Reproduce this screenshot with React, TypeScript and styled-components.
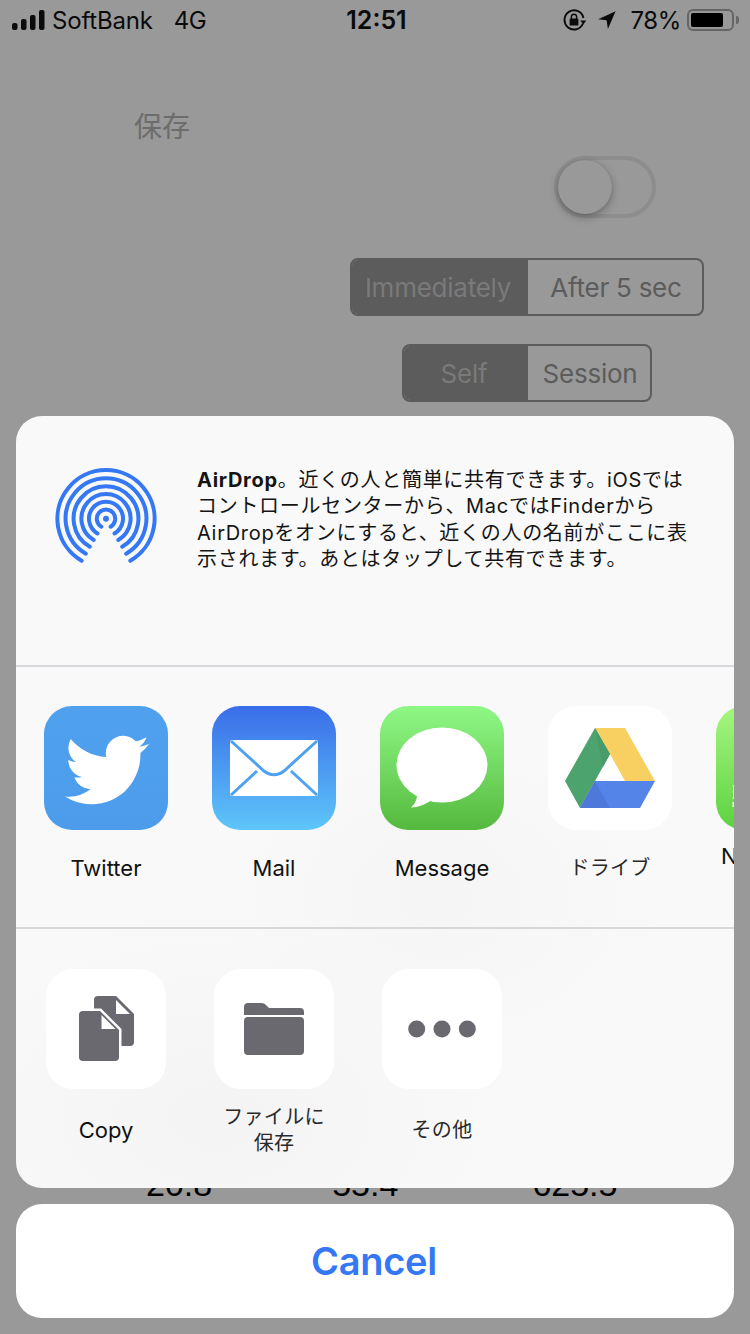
import styled, { createGlobalStyle } from "styled-components";

const GlobalStyle = createGlobalStyle`
	html, body {
		margin: 0;
		padding: 0;
		background: #999999;
	}
	body {
		font-family: Inter, "Noto Sans CJK JP", sans-serif;
	}
`;

const Page = styled.div`
	position: relative;
	width: 750px;
	height: 1334px;
	overflow: hidden;
	background: #999999;
	display: flex;
	flex-direction: column;
`;

const StatusBar = styled.div`
	height: 40px;
	flex-shrink: 0;
	padding: 0 11px 0 12px;
	display: grid;
	grid-template-columns: 1fr auto 1fr;
	align-items: center;
	color: #0b0b0b;
	font-size: 24px;
`;

const StatusLeft = styled.div`
	display: flex;
	align-items: center;
`;

const Carrier = styled.span`
	margin-left: 7px;
	letter-spacing: -0.2px;
`;

const Network = styled.span`
	margin-left: 21px;
	letter-spacing: -0.4px;
`;

const Clock = styled.div`
	margin-left: 2px;
	font-size: 25px;
	font-weight: 600;
`;

const StatusRight = styled.div`
	display: flex;
	align-items: center;
	justify-content: flex-end;
`;

const Percent = styled.span`
	margin: 0 6px 0 15px;
	letter-spacing: -0.4px;
`;

const Battery = styled.div`
	position: relative;
	box-sizing: border-box;
	width: 47px;
	height: 22px;
	border: 2px solid #666666;
	border-radius: 6px;
	padding: 2px;
	margin-right: 5px;

	&::after {
		content: "";
		position: absolute;
		right: -7px;
		top: 5px;
		width: 3px;
		height: 8px;
		border-radius: 0 3px 3px 0;
		background: #666666;
	}
`;

const BatteryLevel = styled.div`
	width: 32px;
	height: 100%;
	background: #000000;
	border-radius: 2px;
`;

const Backdrop = styled.div`
	display: flex;
	flex-direction: column;
`;

const Title = styled.div`
	margin: 65px 0 0 134px;
	font-family: "Noto Sans CJK JP", sans-serif;
	font-size: 28px;
	line-height: 40px;
	color: #6c6c6c;
`;

const SwitchTrack = styled.div`
	align-self: flex-end;
	box-sizing: border-box;
	width: 102px;
	height: 62px;
	margin: 11px 94px 0 0;
	border: 4px solid #8d8d8d;
	border-radius: 31px;
`;

const SwitchKnob = styled.div`
	width: 54px;
	height: 54px;
	border-radius: 50%;
	background: #999999;
	box-shadow: 0 3px 8px rgba(0, 0, 0, 0.3), 0 0 1px rgba(0, 0, 0, 0.2);
`;

const Segmented = styled.div<{ $right: number; $top: number }>`
	align-self: flex-end;
	display: flex;
	box-sizing: border-box;
	height: 58px;
	margin: ${(p) => p.$top}px ${(p) => p.$right}px 0 0;
	border: 2px solid #5c5c5c;
	border-radius: 8px;
	overflow: hidden;
`;

const Segment = styled.div<{ $active?: boolean; $width: number }>`
	width: ${(p) => p.$width}px;
	box-sizing: border-box;
	padding: ${(p) => (p.$active ? "0 4px 0 0" : "0 0 0 2px")};
	display: flex;
	align-items: center;
	justify-content: center;
	font-size: 26px;
	letter-spacing: -0.25px;
	background: ${(p) => (p.$active ? "#5c5c5c" : "transparent")};
	color: ${(p) => (p.$active ? "#7a7a7a" : "#5c5c5c")};
`;

const Readings = styled.div`
	margin-top: 762px;
	height: 40px;
	display: flex;
	font-family: "Liberation Sans", Arial, sans-serif;
	font-size: 34px;
	line-height: 40px;
	color: #000000;
`;

const Reading = styled.div<{ $left: number }>`
	margin-left: ${(p) => p.$left}px;
`;

const Overlay = styled.div`
	position: absolute;
	inset: 0;
	padding: 16px;
	box-sizing: border-box;
	display: flex;
	flex-direction: column;
	justify-content: flex-end;
	gap: 16px;
`;

const Sheet = styled.div`
	height: 772px;
	border-radius: 26px;
	overflow: hidden;
	display: flex;
	flex-direction: column;
	background:
		radial-gradient(ellipse 300px 200px at 200px 700px, #f4f4f5, transparent),
		radial-gradient(ellipse 220px 160px at 420px 480px, #f5f5f6, transparent),
		#f9f9f9;
`;

const AirDropPanel = styled.div`
	height: 251px;
	box-sizing: border-box;
	flex-shrink: 0;
	padding: 49px 0 0 34px;
	display: flex;
	align-items: flex-start;
	gap: 35px;
	border-bottom: 2px solid #d8d8dc;
`;

const AirDropText = styled.div`
	margin-top: 2px;
	font-size: 20px;
	line-height: 26.3px;
	letter-spacing: 0.7px;
	color: #141414;
	white-space: nowrap;

	b {
		font-weight: 700;
	}
`;

const ShareRow = styled.div<{ $top: number; $height: number; $line?: boolean }>`
	height: ${(p) => p.$height}px;
	box-sizing: border-box;
	flex-shrink: 0;
	padding: ${(p) => p.$top}px 0 0 6px;
	display: flex;
	overflow: hidden;
	border-bottom: ${(p) => (p.$line ? "2px solid #d8d8dc" : "0")};
`;

const ShareItem = styled.div`
	width: 168px;
	flex-shrink: 0;
	display: flex;
	flex-direction: column;
	align-items: center;
`;

const AppIcon = styled.div<{ $bg: string }>`
	width: 124px;
	height: 124px;
	border-radius: 28px;
	overflow: hidden;
	background: ${(p) => p.$bg};
	display: flex;
	align-items: center;
	justify-content: center;
	flex-shrink: 0;
`;

const ActionIcon = styled.div`
	width: 120px;
	height: 120px;
	border-radius: 27px;
	overflow: hidden;
	background: #ffffff;
	flex-shrink: 0;
`;

const Label = styled.div<{ $top: number; $kana?: boolean; $cut?: boolean }>`
	margin-top: ${(p) => p.$top}px;
	height: 52px;
	width: 100%;
	display: flex;
	align-items: center;
	justify-content: ${(p) => (p.$cut ? "flex-start" : "center")};
	padding-left: ${(p) => (p.$cut ? "27px" : "0")};
	box-sizing: border-box;
	text-align: ${(p) => (p.$cut ? "left" : "center")};
	font-size: ${(p) => (p.$kana ? "20px" : "22px")};
	letter-spacing: ${(p) => (p.$kana ? "0.3px" : "0")};
	line-height: 26px;
	color: ${(p) => (p.$kana ? "#2a2a2a" : "#111111")};
`;

const CancelButton = styled.div`
	height: 114px;
	border-radius: 26px;
	background: #ffffff;
	display: flex;
	align-items: center;
	justify-content: center;
	padding-right: 2px;
	font-size: 38px;
	font-weight: 600;
	letter-spacing: -0.3px;
	color: #3478f6;
`;

const SignalIcon = () => (
	<svg width="33" height="20" viewBox="0 0 33 20">
		<rect x="0" y="13" width="5.5" height="7" rx="2" fill="#0b0b0b" />
		<rect x="9" y="9" width="5.5" height="11" rx="2" fill="#0b0b0b" />
		<rect x="18" y="5" width="5.5" height="15" rx="2" fill="#0b0b0b" />
		<rect x="27" y="0" width="5.5" height="20" rx="2" fill="#0b0b0b" />
	</svg>
);

const RotationLockIcon = () => (
	<svg width="24" height="22" viewBox="0 0 24 22">
		<path d="M20 14.5A9.6 9.6 0 1 1 20.5 9" fill="none" stroke="#0b0b0b" strokeWidth="1.9" />
		<path d="M17.3 11.6h6l-3 3.9z" fill="#0b0b0b" />
		<rect x="6.6" y="9.6" width="8.8" height="7" rx="1.2" fill="#0b0b0b" />
		<path d="M8.4 10V7.8a2.6 2.6 0 0 1 5.2 0V10" fill="none" stroke="#0b0b0b" strokeWidth="1.5" />
	</svg>
);

const LocationIcon = () => (
	<svg width="18" height="18" viewBox="0 0 18 18" style={{ marginLeft: 11 }}>
		<path d="M17.6 0.3 0.2 8.2l8.4 1 1.3 8.7z" fill="#0b0b0b" />
	</svg>
);

const ringRadii = [48.6, 40.4, 32.4, 24.6, 17, 9.2];

const AirDropIcon = () => (
	<svg width="112" height="105" viewBox="0 0 112 105">
		{ringRadii.map((r) => {
			const y = (53.7 + r * 0.866).toFixed(2);
			return (
				<path
					key={r}
					d={`M${56 - r * 0.5} ${y}A${r} ${r} 0 1 1 ${56 + r * 0.5} ${y}`}
					fill="none"
					stroke="#3478f6"
					strokeWidth="4"
					strokeLinecap="round"
				/>
			);
		})}
		<circle cx="56" cy="53.7" r="3" fill="#3478f6" />
	</svg>
);

const TwitterIcon = () => (
	<svg width="84" height="84" viewBox="0 0 24 24" style={{ marginTop: 4, marginLeft: 2 }}>
		<path
			fill="#ffffff"
			d="M23.953 4.57a10 10 0 01-2.825.775 4.958 4.958 0 002.163-2.723c-.951.555-2.005.959-3.127 1.184a4.92 4.92 0 00-8.384 4.482C7.69 8.095 4.067 6.13 1.64 3.162a4.822 4.822 0 00-.666 2.475c0 1.71.87 3.213 2.188 4.096a4.904 4.904 0 01-2.228-.616v.06a4.923 4.923 0 003.946 4.827 4.996 4.996 0 01-2.212.085 4.936 4.936 0 004.604 3.417 9.867 9.867 0 01-6.102 2.105c-.39 0-.779-.023-1.17-.067a13.995 13.995 0 007.557 2.209c9.053 0 13.998-7.496 13.998-13.985 0-.21 0-.42-.015-.63A9.935 9.935 0 0024 4.59z"
		/>
	</svg>
);

const MailIcon = () => (
	<svg width="124" height="124" viewBox="0 0 124 124">
		<rect x="18" y="34" width="88" height="56" rx="2" fill="#ffffff" />
		<path
			d="M19 35l33 30c6 5 14 5 20 0l33-30"
			fill="none"
			stroke="#4ea2f1"
			strokeWidth="3"
		/>
		<path d="M19 89l26-24M105 89L79 65" fill="none" stroke="#4ea2f1" strokeWidth="3" />
	</svg>
);

const MessageIcon = () => (
	<svg width="124" height="124" viewBox="0 0 124 124">
		<ellipse cx="62" cy="59" rx="45.5" ry="37.5" fill="#ffffff" />
		<path d="M37 86c1 6-2 12-6 15.500 7 0 14-3 20-7z" fill="#ffffff" />
	</svg>
);

const DriveIcon = () => (
	<svg width="124" height="124" viewBox="0 0 124 124">
		<path d="M47 22h30l30 53H77L62 48z" fill="#f8d062" />
		<path d="M47 22l15 26-30 54-15-27z" fill="#4ca36d" />
		<path d="M47 22l15 26-7 13z" fill="#499c69" />
		<path d="M47 75h60l-15 27H32z" fill="#5584e9" />
		<path d="M47 75l15 27H32z" fill="#4e79da" />
	</svg>
);

// only the left sliver of this app's glyph shows before the sheet clips it
const CutOffIcon = () => (
	<svg width="124" height="124" viewBox="0 0 124 124">
		<path d="M17 79h1v14h-1zM16.500 96h1.500v5h-1.500z" fill="#e9fbe2" />
	</svg>
);

const CopyIcon = () => (
	<svg width="120" height="120" viewBox="0 0 120 120">
		<path
			d="M52 27h18l18 18v28a4 4 0 0 1-4 4H52a4 4 0 0 1-4-4V31a4 4 0 0 1 4-4z"
			fill="#69696f"
		/>
		<path d="M70 31v14h14z" fill="#ffffff" />
		<path
			d="M37 42h17l19 19v27a4 4 0 0 1-4 4H37a4 4 0 0 1-4-4V46a4 4 0 0 1 4-4z"
			fill="#69696f"
			stroke="#ffffff"
			strokeWidth="5"
			paintOrder="stroke"
		/>
		<path d="M55.500 46v14h14z" fill="#ffffff" />
	</svg>
);

const FolderIcon = () => (
	<svg width="120" height="120" viewBox="0 0 120 120">
		<path
			d="M30 46v-8a4 4 0 0 1 4-4h13c3 0 4 1 6 3l2 2h31a4 4 0 0 1 4 4v3z"
			fill="#69696f"
		/>
		<rect x="30" y="48" width="60" height="38" rx="4" fill="#69696f" />
	</svg>
);

const MoreIcon = () => (
	<svg width="120" height="120" viewBox="0 0 120 120">
		<circle cx="34.700" cy="60" r="8.500" fill="#69696f" />
		<circle cx="60" cy="60" r="8.500" fill="#69696f" />
		<circle cx="85.300" cy="60" r="8.500" fill="#69696f" />
	</svg>
);

const App = () => {
	return (
		<Page>
			<GlobalStyle />
			<StatusBar>
				<StatusLeft>
					<SignalIcon />
					<Carrier>SoftBank</Carrier>
					<Network>4G</Network>
				</StatusLeft>
				<Clock>12:51</Clock>
				<StatusRight>
					<RotationLockIcon />
					<LocationIcon />
					<Percent>78%</Percent>
					<Battery>
						<BatteryLevel />
					</Battery>
				</StatusRight>
			</StatusBar>

			<Backdrop>
				<Title>保存</Title>
				<SwitchTrack>
					<SwitchKnob />
				</SwitchTrack>
				<Segmented $right={46} $top={40}>
					<Segment $active $width={176}>Immediately</Segment>
					<Segment $width={174}>After 5 sec</Segment>
				</Segmented>
				<Segmented $right={98} $top={28}>
					<Segment $active $width={124}>Self</Segment>
					<Segment $width={122}>Session</Segment>
				</Segmented>
				<Readings>
					<Reading $left={146}>20.8</Reading>
					<Reading $left={120}>55.4</Reading>
					<Reading $left={134}>625.5</Reading>
				</Readings>
			</Backdrop>

			<Overlay>
				<Sheet>
					<AirDropPanel>
						<AirDropIcon />
						<AirDropText>
							<b>AirDrop</b>。近くの人と簡単に共有できます。iOSでは
							<br />
							コントロールセンターから、MacではFinderから
							<br />
							AirDropをオンにすると、近くの人の名前がここに表
							<br />
							示されます。あとはタップして共有できます。
						</AirDropText>
					</AirDropPanel>

					<ShareRow $top={39} $height={262} $line>
						<ShareItem>
							<AppIcon $bg="linear-gradient(#4fa1ee, #4c9ceb)">
								<TwitterIcon />
							</AppIcon>
							<Label $top={12}>Twitter</Label>
						</ShareItem>
						<ShareItem>
							<AppIcon $bg="linear-gradient(#3a6de8, #5ec6fa)">
								<MailIcon />
							</AppIcon>
							<Label $top={12}>Mail</Label>
						</ShareItem>
						<ShareItem>
							<AppIcon $bg="linear-gradient(#8ff885, #55b93e)">
								<MessageIcon />
							</AppIcon>
							<Label $top={12}>Message</Label>
						</ShareItem>
						<ShareItem>
							<AppIcon $bg="#ffffff">
								<DriveIcon />
							</AppIcon>
							<Label $top={12} $kana>ドライブ</Label>
						</ShareItem>
						<ShareItem>
							<AppIcon $bg="linear-gradient(#a6f680, #5cd240)">
								<CutOffIcon />
							</AppIcon>
							<Label $top={0} $cut>N</Label>
						</ShareItem>
					</ShareRow>

					<ShareRow $top={40} $height={259}>
						<ShareItem>
							<ActionIcon>
								<CopyIcon />
							</ActionIcon>
							<Label $top={15}>Copy</Label>
						</ShareItem>
						<ShareItem>
							<ActionIcon>
								<FolderIcon />
							</ActionIcon>
							<Label $top={15} $kana>
								ファイルに
								<br />
								保存
							</Label>
						</ShareItem>
						<ShareItem>
							<ActionIcon>
								<MoreIcon />
							</ActionIcon>
							<Label $top={15} $kana>その他</Label>
						</ShareItem>
					</ShareRow>
				</Sheet>
				<CancelButton>Cancel</CancelButton>
			</Overlay>
		</Page>
	);
};

export default App;
